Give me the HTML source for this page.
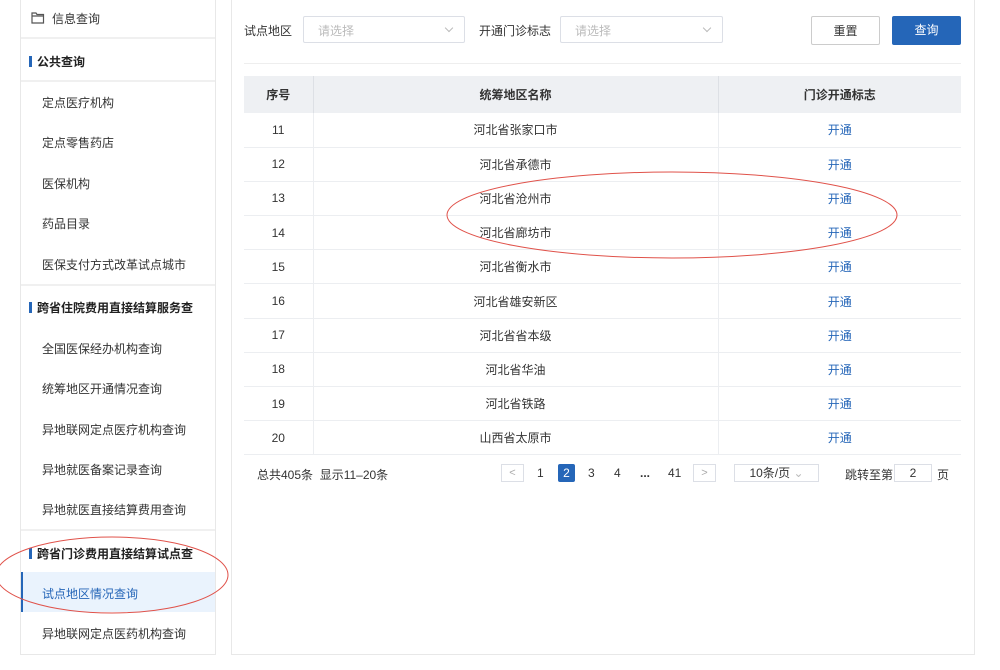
<!DOCTYPE html>
<html><head><meta charset="utf-8"><style>
*{margin:0;padding:0;box-sizing:border-box}
body{width:1000px;height:670px;background:#fff;font-family:"Liberation Sans","Noto Sans CJK SC",sans-serif;font-size:12px;color:#333;position:relative;overflow:hidden}
.side{position:absolute;left:20px;top:-2px;width:196px;height:657px;border:1px solid #e8e8e8;border-top:none;background:#fff}
.r{position:absolute;left:0;width:194px;}
.it{position:absolute;left:21px;font-size:12px;color:#333}
.hd{position:absolute;left:8px;font-size:12px;font-weight:bold;color:#222}
.hd:before{content:"";display:inline-block;width:3px;height:11px;background:#2566b8;margin-right:5px;vertical-align:-1px}
.dv{position:absolute;left:0;width:194px;height:2px;background:#f0f0f0}
.main{position:absolute;left:231px;top:-2px;width:744px;height:657px;border:1px solid #e8e8e8;border-top:none}
.sel{position:absolute;top:16px;height:27px;border:1px solid #dcdfe6;border-radius:2px;color:#bbb;padding:5px 14px;font-size:12px}
.sel:after{content:"";position:absolute;right:12px;top:8px;width:5px;height:5px;border-right:1px solid #bbb;border-bottom:1px solid #bbb;transform:rotate(45deg)}
.lbl{position:absolute;top:22px;font-size:12px;color:#333}
.btn{position:absolute;top:16px;height:29px;width:69px;text-align:center;line-height:28px;font-size:12px;border-radius:2px}
table{position:absolute;left:244px;top:76px;width:717px;border-collapse:collapse;font-size:12px}
th{background:#eef0f3;height:37px;font-weight:bold;color:#333;border-right:1px solid #dde0e5}
th:last-child{border-right:none}
td{height:34.2px;text-align:center;border-bottom:1px solid #eceef1;border-right:1px solid #eceef1}
td:last-child{border-right:none;color:#2566b8}
.pg{position:absolute;top:466px;font-size:12px;color:#333}
.box{position:absolute;top:464px;height:18px;border:1px solid #dcdfe6;text-align:center;line-height:16px;color:#aaa;font-size:11px}
</style></head><body>
<div class="side">
 <div class="r" style="top:12px;left:10px"><svg width="14" height="12" viewBox="0 0 14 12" style="vertical-align:-1px"><path d="M1 1h4l1 1.5h6.5v8.5H1z M1 4h12" fill="none" stroke="#555" stroke-width="1.2"/></svg><span style="margin-left:7px;color:#333">信息查询</span></div>
 <div class="dv" style="top:39px"></div>
 <div class="hd" style="top:55px">公共查询</div>
 <div class="dv" style="top:82px"></div>
 <div class="it" style="top:96px">定点医疗机构</div>
 <div class="it" style="top:136px">定点零售药店</div>
 <div class="it" style="top:177px">医保机构</div>
 <div class="it" style="top:217px">药品目录</div>
 <div class="it" style="top:258px">医保支付方式改革试点城市</div>
 <div class="dv" style="top:286px"></div>
 <div class="hd" style="top:301px">跨省住院费用直接结算服务查</div>
 <div class="it" style="top:342px">全国医保经办机构查询</div>
 <div class="it" style="top:382px">统筹地区开通情况查询</div>
 <div class="it" style="top:423px">异地联网定点医疗机构查询</div>
 <div class="it" style="top:463px">异地就医备案记录查询</div>
 <div class="it" style="top:503px">异地就医直接结算费用查询</div>
 <div class="dv" style="top:531px"></div>
 <div class="hd" style="top:547px">跨省门诊费用直接结算试点查</div>
 <div class="r" style="top:574px;height:40px;background:#eaf3fd;border-left:2px solid #2566b8"></div>
 <div class="it" style="top:587px;color:#2566b8">试点地区情况查询</div>
 <div class="it" style="top:627px">异地联网定点医药机构查询</div>
</div>
<div class="main"></div>
<div class="lbl" style="left:244px">试点地区</div>
<div class="sel" style="left:303px;width:162px">请选择</div>
<div class="lbl" style="left:479px">开通门诊标志</div>
<div class="sel" style="left:560px;width:163px">请选择</div>
<div class="btn" style="left:811px;border:1px solid #ccc;color:#333">重置</div>
<div class="btn" style="left:892px;background:#2566b8;color:#fff">查询</div>
<div style="position:absolute;left:244px;top:63px;width:717px;height:1px;background:#eee"></div>
<table>
<tr><th style="width:69px">序号</th><th style="width:405px">统筹地区名称</th><th>门诊开通标志</th></tr>
<tr><td>11</td><td>河北省张家口市</td><td>开通</td></tr>
<tr><td>12</td><td>河北省承德市</td><td>开通</td></tr>
<tr><td>13</td><td>河北省沧州市</td><td>开通</td></tr>
<tr><td>14</td><td>河北省廊坊市</td><td>开通</td></tr>
<tr><td>15</td><td>河北省衡水市</td><td>开通</td></tr>
<tr><td>16</td><td>河北省雄安新区</td><td>开通</td></tr>
<tr><td>17</td><td>河北省省本级</td><td>开通</td></tr>
<tr><td>18</td><td>河北省华油</td><td>开通</td></tr>
<tr><td>19</td><td>河北省铁路</td><td>开通</td></tr>
<tr><td>20</td><td>山西省太原市</td><td>开通</td></tr>
</table>
<div class="pg" style="left:257px">总共405条 &nbsp;显示11–20条</div>
<div class="box" style="left:501px;width:23px">&lt;</div>
<div class="pg" style="left:537px">1</div>
<div style="position:absolute;left:558px;top:464px;width:17px;height:18px;background:#2566b8;color:#fff;text-align:center;line-height:18px;border-radius:2px">2</div>
<div class="pg" style="left:588px">3</div>
<div class="pg" style="left:614px">4</div>
<div class="pg" style="left:640px;font-weight:bold">...</div>
<div class="pg" style="left:668px">41</div>
<div class="box" style="left:693px;width:23px">&gt;</div>
<div class="box" style="left:734px;width:85px;color:#333;font-size:12px">10条/页 <span style="color:#bbb">⌄</span></div>
<div class="pg" style="left:845px">跳转至第</div>
<div class="box" style="left:894px;width:38px;color:#333;font-size:12px">2</div>
<div class="pg" style="left:937px">页</div>
<svg width="1000" height="670" style="position:absolute;left:0;top:0;pointer-events:none">
<ellipse cx="672" cy="215" rx="225" ry="43" fill="none" stroke="#e0524a" stroke-width="1"/>
<ellipse cx="112" cy="575" rx="116" ry="38" fill="none" stroke="#e0524a" stroke-width="1"/>
</svg>
</body></html>
